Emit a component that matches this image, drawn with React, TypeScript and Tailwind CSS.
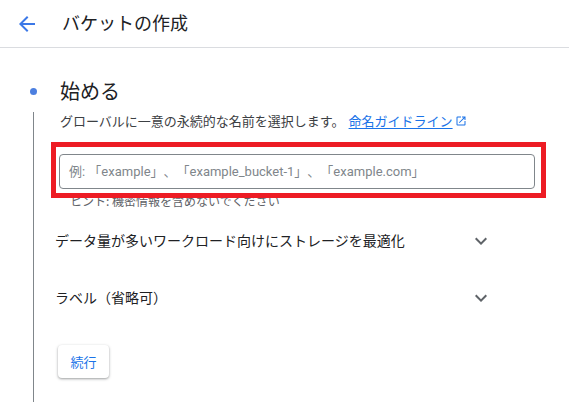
import React from "react";

const jp = { fontFamily: '"Noto Sans CJK JP", Roboto, sans-serif' };

function Chevron() {
  return (
    <svg width="24" height="24" viewBox="0 0 24 24" className="fill-[#5f6368]">
      <path d="M16.59 8.59 12 13.17 7.41 8.59 6 10l6 6 6-6z" />
    </svg>
  );
}

function AccordionRow({ label }: { label: string }) {
  return (
    <div className="h-[57px] flex items-center justify-between pr-[42px] text-[14px] text-[#202124]">
      <span>{label}</span>
      <Chevron />
    </div>
  );
}

export default function App() {
  return (
    <div className="w-[569px] h-[408px] bg-white overflow-hidden [text-spacing-trim:space-all]" style={jp}>
      <header className="h-[48px] flex items-center border-b border-[#dadce0]">
        <button className="ml-[15px] w-6 h-6 flex items-center justify-center">
          <svg width="24" height="24" viewBox="0 0 24 24" className="fill-[#3b78e7]">
            <path d="M20 11H7.83l5.59-5.59L12 4l-8 8 8 8 1.41-1.41L7.83 13H20v-2z" />
          </svg>
        </button>
        <h1 className="ml-[23px] text-[18px] text-[#202124] leading-none -mt-[4px]">バケットの作成</h1>
      </header>

      <div className="flex pt-[29px]">
        <div className="w-[55px] flex flex-col">
          <div className="h-[28px] flex items-center">
            <div className="ml-[30px] w-[7px] h-[7px] rounded-full bg-[#4c7fe0]" />
          </div>
          <div className="ml-[33px] w-px h-[290px] mt-[7px] bg-[#80868b]" />
        </div>

        <div className="w-[480px] flex flex-col">
          <h2 className="pl-[5px] text-[20px] leading-[28px] text-[#202124]">始める</h2>
          <p className="pl-[5px] mt-[6px] text-[13px] leading-[20px] text-[#3c4043] flex items-center">
            グローバルに一意の永続的な名前を選択します。
            <a className="ml-[4px] text-[#1a73e8] underline underline-offset-2 flex items-center">
              命名ガイドライン
            </a>
            <svg width="12" height="12" viewBox="0 0 24 24" className="ml-[2px] fill-[#1a73e8]">
              <path d="M19 19H5V5h7V3H5a2 2 0 0 0-2 2v14a2 2 0 0 0 2 2h14c1.1 0 2-.9 2-2v-7h-2v7zM14 3v2h3.59l-9.83 9.83 1.41 1.41L19 6.41V10h2V3h-7z" />
            </svg>
          </p>

          <div className="relative ml-[4px] mt-[23px]">
            <div className="h-[35px] w-[476px] rounded-[4px] border border-[#80868b] flex items-center px-[9px] text-[13px] text-[#80868b] font-['Roboto','Noto_Sans_CJK_JP',sans-serif]">
              例: 「example」、「example_bucket-1」、「example.com」
            </div>
            <p className="mt-[4px] pl-[11px] text-[12px] leading-[16px] text-[#5f6368]">
              ヒント: 機密情報を含めないでください
            </p>
            <div className="absolute left-[-8px] top-[-12px] w-[495px] h-[56px] border-[5px] border-[#ed1c24] z-10" />
          </div>

          <div className="mt-[3px]">
            <AccordionRow label="データ量が多いワークロード向けにストレージを最適化" />
            <AccordionRow label="ラベル（省略可）" />
          </div>

          <div className="mt-[19px] ml-[3px]">
            <button className="w-[51px] h-[33px] rounded-[4px] bg-white text-[13px] text-[#1a73e8] shadow-[0_1px_3px_rgba(60,64,67,0.35),0_1px_2px_rgba(60,64,67,0.2)]">
              続行
            </button>
          </div>
        </div>
      </div>
    </div>
  );
}
